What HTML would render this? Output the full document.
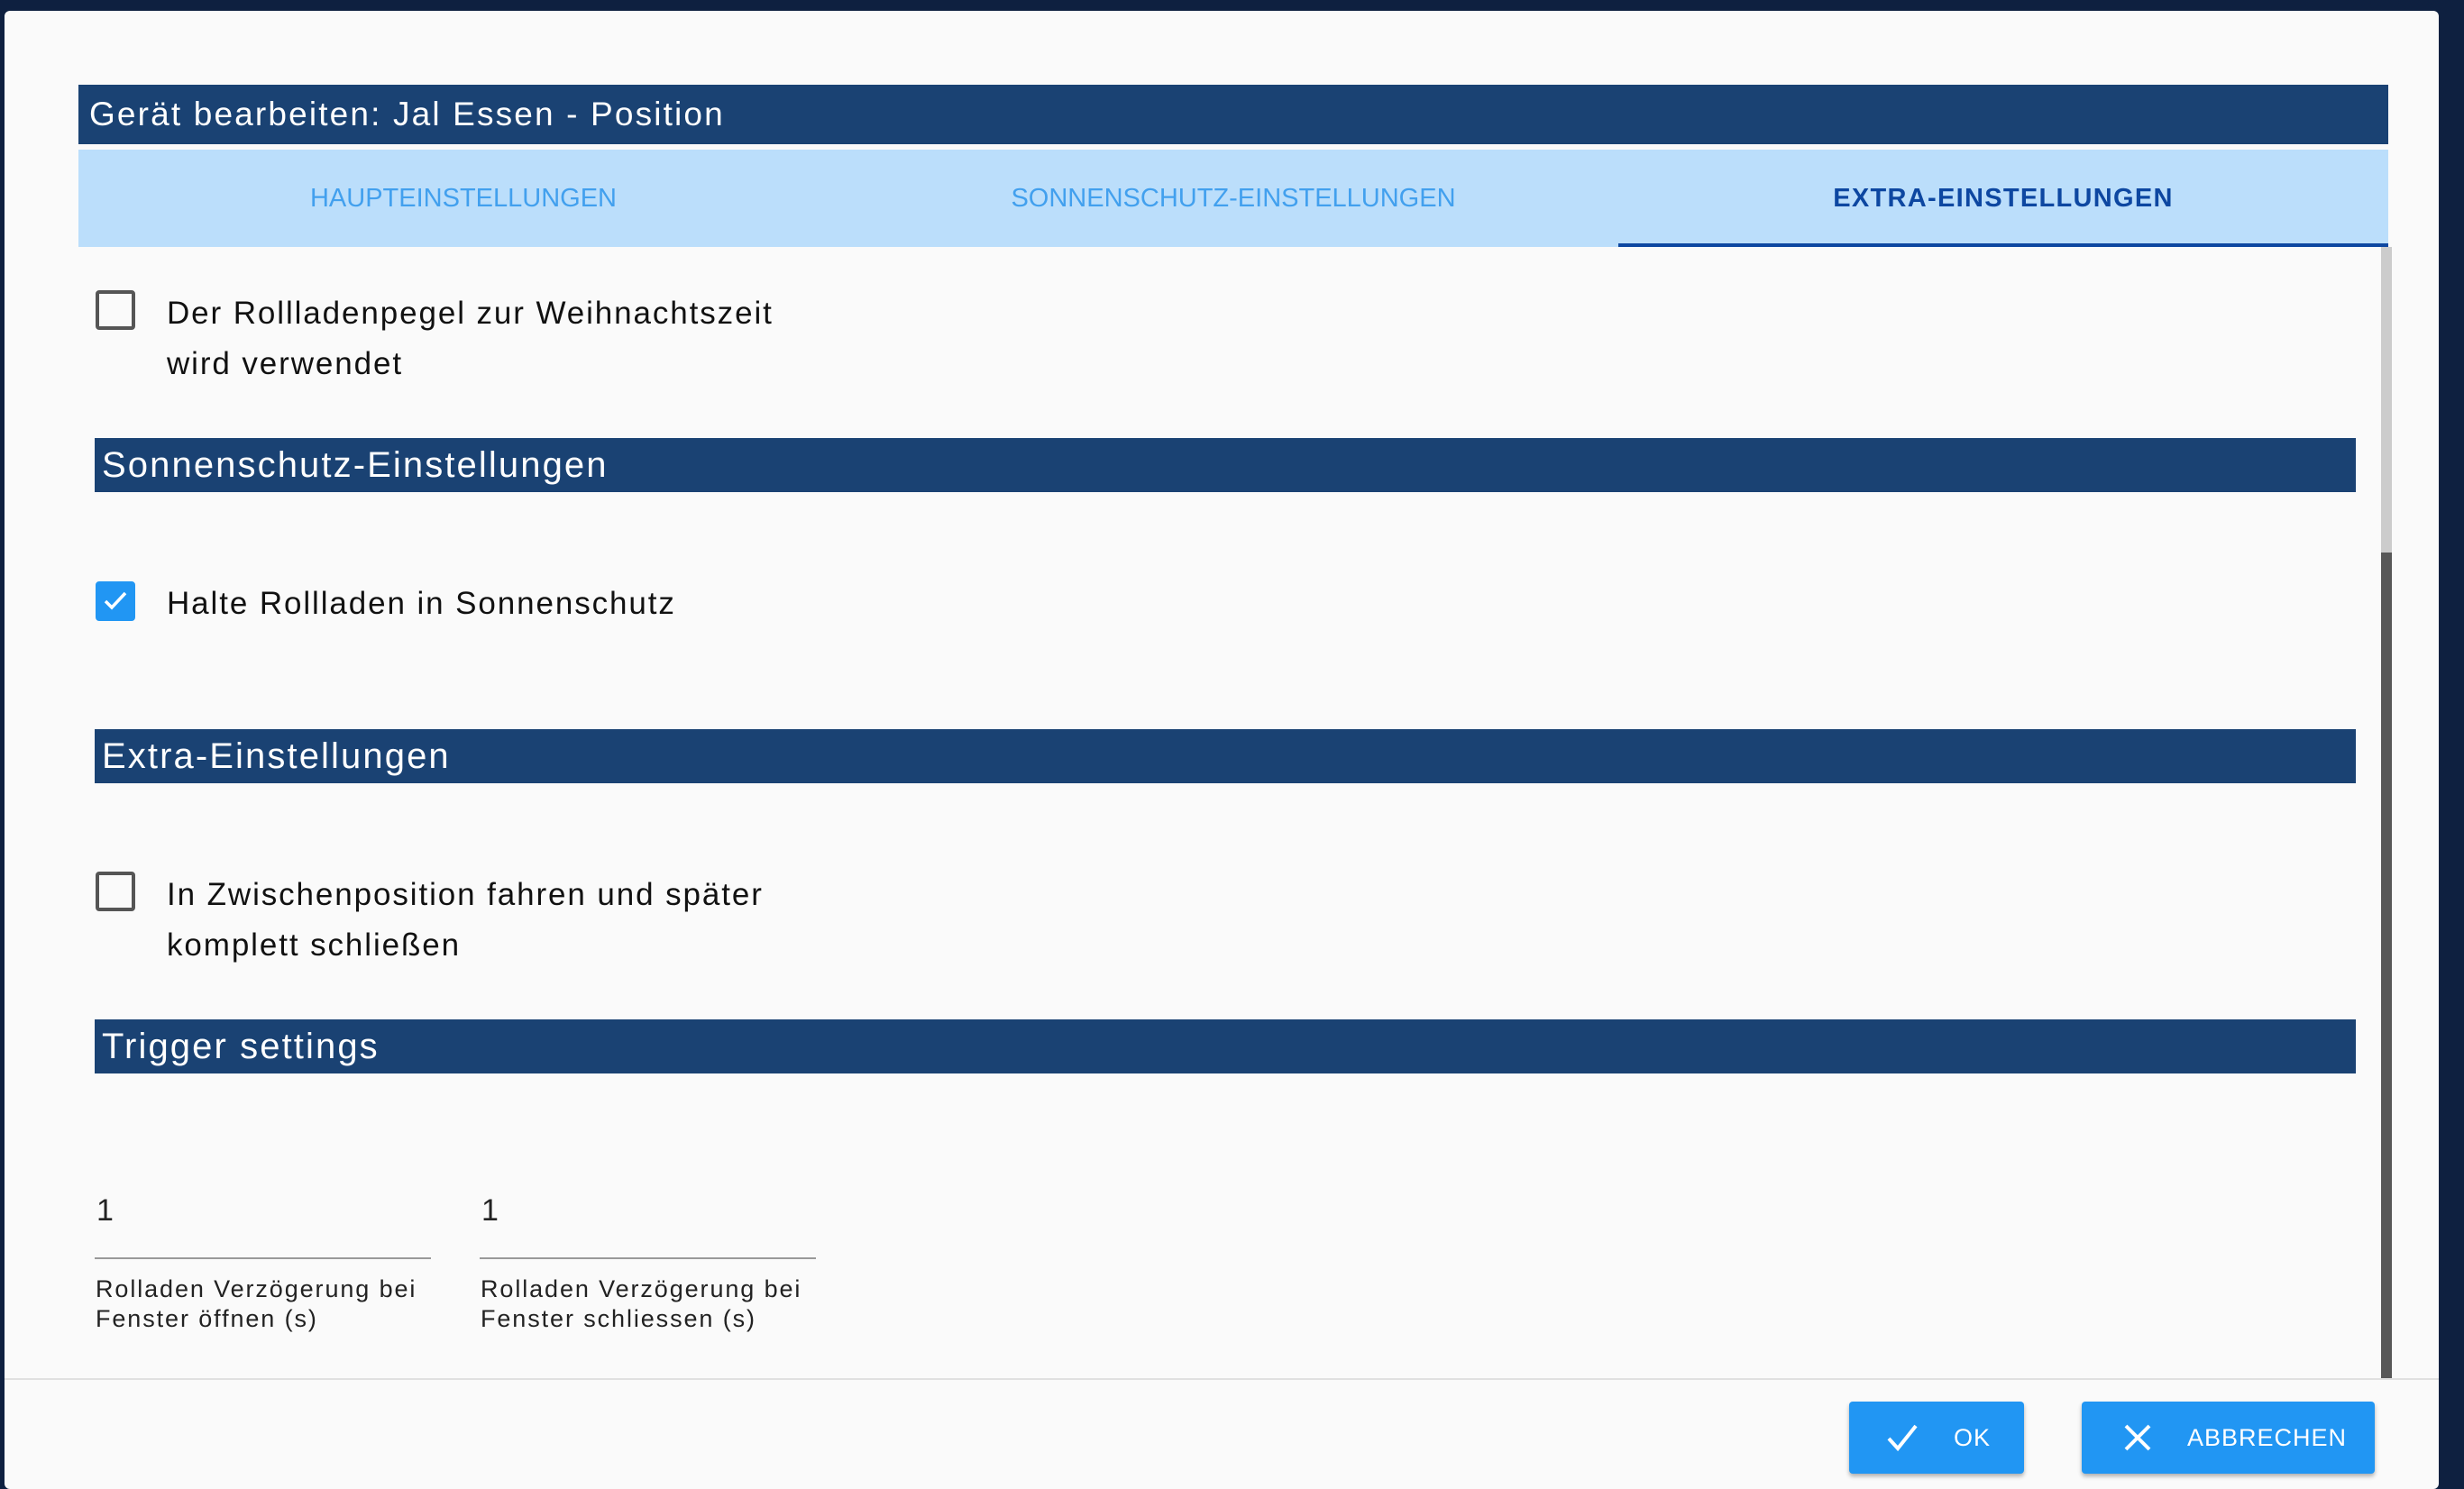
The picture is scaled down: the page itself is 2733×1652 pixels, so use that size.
<!DOCTYPE html>
<html><head><meta charset="utf-8"><style>
*{margin:0;padding:0;box-sizing:border-box}
body{width:2733px;height:1648px;background:#0e2040;position:relative;overflow:hidden;font-family:"Liberation Sans",sans-serif}
.dlg{position:absolute;left:5px;top:12px;width:2700px;height:1640px;background:#fafafa;border-radius:6px}
.abs{position:absolute}
.title{left:87px;top:94px;width:2562px;height:66px;background:#1a4273;color:#fff;font-size:37px;line-height:66px;padding-left:12px;letter-spacing:2.15px}
.tabs{left:87px;top:166px;width:2562px;height:108px;background:#bbdefb}
.tab{position:absolute;top:0;width:854px;height:108px;line-height:108px;text-align:center;font-size:29px;color:#42a0ee}
.tab.act{color:#0d47a1;font-weight:bold;border-bottom:4px solid #0d47a1;line-height:108px;letter-spacing:1.3px}
.cb{width:44px;height:44px;border:4px solid #555;border-radius:4px}
.cb.on{background:#2196f3;border-color:#2196f3}
.txt{font-size:35px;color:#111;line-height:56px;letter-spacing:1.9px}
.sec{left:105px;width:2508px;height:60px;background:#1a4273;color:#fff;font-size:40px;line-height:60px;padding-left:8px;letter-spacing:2.1px}
.val{font-size:34px;color:#222}
.ul{height:2px;background:#999}
.lbl{font-size:27px;color:#222;line-height:33px;letter-spacing:1.9px}
.btn{position:absolute;top:1555px;height:80px;background:#2196f3;border-radius:4px;box-shadow:0 3px 5px rgba(0,0,0,.3);color:#fff;font-size:27px;line-height:80px;letter-spacing:1px}
</style></head><body>
<div class="dlg"></div>
<div class="abs title">Gerät bearbeiten: Jal Essen - Position</div>
<div class="abs tabs">
<div class="tab" style="left:0">HAUPTEINSTELLUNGEN</div>
<div class="tab" style="left:854px">SONNENSCHUTZ-EINSTELLUNGEN</div>
<div class="tab act" style="left:1708px">EXTRA-EINSTELLUNGEN</div>
</div>
<div class="abs" style="left:2641px;top:274px;width:12px;height:339px;background:#ccc"></div>
<div class="abs" style="left:2641px;top:613px;width:12px;height:917px;background:#585858"></div>

<div class="abs cb" style="left:106px;top:322px"></div>
<div class="abs txt" style="left:185px;top:320px">Der Rollladenpegel zur Weihnachtszeit<br>wird verwendet</div>

<div class="abs sec" style="top:486px">Sonnenschutz-Einstellungen</div>
<div class="abs cb on" style="left:106px;top:645px"><svg width="36" height="36" viewBox="0 0 36 36" style="position:absolute;left:0;top:0"><path d="M7 18 L14 25 L29 9" stroke="#fff" stroke-width="3.5" fill="none"/></svg></div>
<div class="abs txt" style="left:185px;top:642px">Halte Rollladen in Sonnenschutz</div>

<div class="abs sec" style="top:809px">Extra-Einstellungen</div>
<div class="abs cb" style="left:106px;top:967px"></div>
<div class="abs txt" style="left:185px;top:965px">In Zwischenposition fahren und später<br>komplett schließen</div>

<div class="abs sec" style="top:1131px">Trigger settings</div>
<div class="abs val" style="left:107px;top:1324px">1</div>
<div class="abs ul" style="left:105px;top:1395px;width:373px"></div>
<div class="abs lbl" style="left:106px;top:1414px">Rolladen Verzögerung bei<br>Fenster öffnen (s)</div>
<div class="abs val" style="left:534px;top:1324px">1</div>
<div class="abs ul" style="left:532px;top:1395px;width:373px"></div>
<div class="abs lbl" style="left:533px;top:1414px">Rolladen Verzögerung bei<br>Fenster schliessen (s)</div>

<div class="abs" style="left:5px;top:1529px;width:2700px;height:2px;background:#e0e0e0"></div>

<div class="btn" style="left:2051px;width:194px">
<svg width="40" height="40" viewBox="0 0 40 40" style="position:absolute;left:40px;top:20px"><path d="M4 21 L14 32 L34 7" stroke="#fff" stroke-width="4" fill="none"/></svg>
<span style="position:absolute;left:116px">OK</span></div>
<div class="btn" style="left:2309px;width:325px">
<svg width="36" height="36" viewBox="0 0 36 36" style="position:absolute;left:44px;top:22px"><path d="M5 5 L31 31 M31 5 L5 31" stroke="#fff" stroke-width="4" fill="none"/></svg>
<span style="position:absolute;left:117px">ABBRECHEN</span></div>
</body></html>
